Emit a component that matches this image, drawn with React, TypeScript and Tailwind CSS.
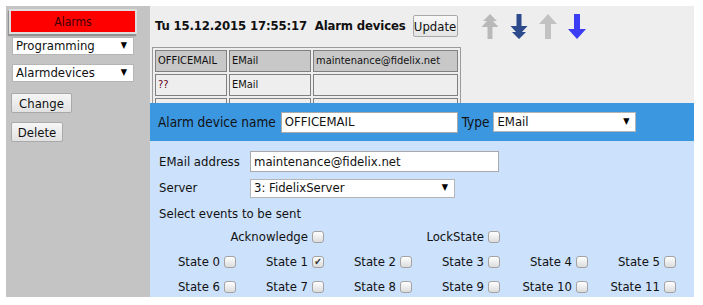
import React from 'react';

const FONT = "font-['DejaVu_Sans_Condensed','DejaVu_Sans',sans-serif]";

const DoubleArrow: React.FC<{ color: string; down?: boolean }> = ({ color, down }) => (
    <svg width="18" height="25" viewBox="0 0 18 25">
        <path
            d="M9 0 L16 7 L12 7 L17.5 13 L11.5 13 L11.5 25 L6.5 25 L6.5 13 L0.5 13 L6 7 L2 7 Z"
            fill={color}
            transform={down ? 'translate(0 25) scale(1 -1)' : undefined}
        />
    </svg>
);

const SingleArrow: React.FC<{ color: string; down?: boolean }> = ({ color, down }) => (
    <svg width="18" height="25" viewBox="0 0 18 25">
        <path
            d="M9 0 L18 10 L12 10 L12 25 L6 25 L6 10 L0 10 Z"
            fill={color}
            transform={down ? 'translate(0 25) scale(1 -1)' : undefined}
        />
    </svg>
);

const Checkbox: React.FC<{ checked?: boolean }> = ({ checked }) => (
    <span className="inline-flex w-[12px] h-[12px] shrink-0 items-center justify-center rounded-[3px] border border-[#a3a3a3] bg-gradient-to-b from-white to-[#dcdcdc] text-[10px] leading-none text-[#333]">
        {checked ? '✔' : ''}
    </span>
);

const Cell: React.FC<{ label: string; checked?: boolean; span2?: boolean }> = ({ label, checked, span2 }) => (
    <div className={`${span2 ? 'col-span-2' : ''} flex items-center justify-end gap-[4px] pr-[2px] h-[25px]`}>
        <span>{label}</span>
        <Checkbox checked={checked} />
    </div>
);

const FakeSelect: React.FC<{ value: string; className: string }> = ({ value, className }) => (
    <div className={`flex items-center justify-between bg-white border border-[#b5b5b5] pl-[3px] pr-[6px] ${className}`}>
        <span>{value}</span>
        <span className="text-[9px] text-black">▼</span>
    </div>
);

const App: React.FC = () => {
    const states = Array.from({ length: 12 }, (_, i) => `State ${i}`);

    return (
        <div className={`w-[703px] h-[305px] bg-white pt-[6px] pl-[6px] text-[13px] text-[#111] ${FONT}`}>
            <div className="flex h-[291px] w-[688px]">
                {/* Sidebar */}
                <aside className="w-[144px] bg-[#c4c4c4] flex flex-col items-start">
                    <div className="mt-[3px] ml-[3px] w-[128px] h-[25px] border-2 border-[#dedede] bg-[#ff0000] flex items-center justify-center text-[12px] text-[#3a0000] shadow-[-1px_2px_1px_rgba(0,0,0,0.25)]">
                        Alarms
                    </div>
                    <FakeSelect value="Programming" className="mt-[3px] ml-[6px] w-[122px] h-[18px]" />
                    <FakeSelect value="Alarmdevices" className="mt-[9px] ml-[6px] w-[122px] h-[18px]" />
                    <button className="mt-[11px] ml-[5px] w-[61px] h-[20px] rounded-[2px] border border-[#a9a9a9] bg-gradient-to-b from-[#f6f6f6] to-[#e2e2e2] text-[13px] leading-none">
                        Change
                    </button>
                    <button className="mt-[9px] ml-[5px] w-[52px] h-[20px] rounded-[2px] border border-[#a9a9a9] bg-gradient-to-b from-[#f6f6f6] to-[#e2e2e2] text-[13px] leading-none">
                        Delete
                    </button>
                </aside>

                {/* Main */}
                <main className="relative w-[544px] bg-[#eeeeee]">
                    <div className="flex items-center pt-[9px] pl-[5px] h-[31px]">
                        <span className="font-bold text-[13px] tracking-[-0.15px] whitespace-pre">Tu 15.12.2015 17:55:17  Alarm devices</span>
                        <button className="ml-[7px] w-[45px] h-[22px] rounded-[2px] border border-[#a9a9a9] bg-gradient-to-b from-[#f8f8f8] to-[#e4e4e4] text-[13px] leading-none">
                            Update
                        </button>
                        <div className="ml-[23px] flex items-center gap-[11px]">
                            <DoubleArrow color="#b9b9b9" />
                            <DoubleArrow color="#2c4a8c" down />
                            <SingleArrow color="#c2c2c2" />
                            <SingleArrow color="#3c3cf5" down />
                        </div>
                    </div>

                    <table className="mt-[10px] ml-[2px] border border-[#9a9a9a] border-separate border-spacing-[2px] text-[11px]">
                        <tbody>
                            <tr className="h-[22px]">
                                <td className="w-[72px] border border-[#808080] bg-[#c8c8c8] px-[2px]">OFFICEMAIL</td>
                                <td className="w-[82px] border border-[#808080] bg-[#c8c8c8] px-[2px]">EMail</td>
                                <td className="w-[145px] border border-[#808080] bg-[#c8c8c8] px-[2px]">maintenance@fidelix.net</td>
                            </tr>
                            <tr className="h-[22px]">
                                <td className="border border-[#808080] px-[2px] text-[#600020]">??</td>
                                <td className="border border-[#808080] px-[2px]">EMail</td>
                                <td className="border border-[#808080] px-[2px]"></td>
                            </tr>
                            <tr className="h-[22px]">
                                <td className="border border-[#808080] px-[2px]"></td>
                                <td className="border border-[#808080] px-[2px]"></td>
                                <td className="border border-[#808080] px-[2px]"></td>
                            </tr>
                        </tbody>
                    </table>

                    {/* Edit panel overlay */}
                    <div className="absolute left-0 right-0 top-[97px] bottom-0 flex flex-col bg-[#cce1fc]">
                        <div className="h-[38px] shrink-0 bg-[#3c97e1] flex items-center pl-[8px]">
                            <span className="text-[13.5px]">Alarm device name</span>
                            <div className="ml-[5px] w-[177px] h-[21px] bg-white border border-[#a9a9a9] flex items-center pl-[3px]">
                                OFFICEMAIL
                            </div>
                            <span className="ml-[4px] text-[13.5px]">Type</span>
                            <FakeSelect value="EMail" className="ml-[4px] w-[143px] h-[20px]" />
                        </div>

                        <div className="pl-[9px] pt-[10px] flex flex-col">
                            <div className="flex items-center h-[21px]">
                                <span className="w-[91px]">EMail address</span>
                                <div className="w-[249px] h-[21px] bg-white border border-[#a9a9a9] flex items-center pl-[3px]">
                                    maintenance@fidelix.net
                                </div>
                            </div>
                            <div className="flex items-center h-[20px] mt-[6px]">
                                <span className="w-[91px]">Server</span>
                                <FakeSelect value="3: FidelixServer" className="w-[205px] h-[19px]" />
                            </div>
                            <div className="h-[16px] mt-[8px] flex items-center">Select events to be sent</div>
                        </div>

                        <div className="grid grid-cols-[repeat(6,88px)] mt-[2px]">
                            <Cell label="Acknowledge" span2 />
                            <Cell label="LockState" span2 />
                            <div className="col-span-2" />
                            {states.map((s, i) => (
                                <Cell key={s} label={s} checked={i === 1} />
                            ))}
                        </div>
                    </div>
                </main>
            </div>
        </div>
    );
};

export default App;
